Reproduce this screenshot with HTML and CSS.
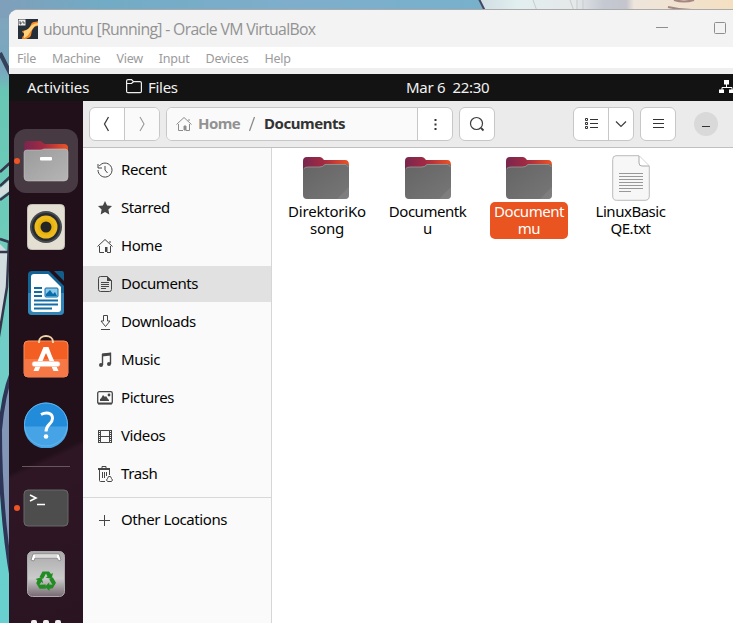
FILE: index.html
```html
<!DOCTYPE html>
<html lang="en">
<head>
<meta charset="utf-8">
<title>ubuntu [Running] - Oracle VM VirtualBox</title>
<link rel="stylesheet" href="styles.css">
</head>
<body>
<svg class="wallpaper" width="733" height="623" viewBox="0 0 733 623">
  <defs>
    <linearGradient id="sky" x1="0" x2="1"><stop offset="0" stop-color="#7f9fba"/><stop offset=".14" stop-color="#72abc5"/><stop offset=".4" stop-color="#7eaecb"/><stop offset="1" stop-color="#6fb4cb"/></linearGradient>
    <linearGradient id="pale" x1="0" x2="1"><stop offset="0" stop-color="#cfdce2"/><stop offset=".15" stop-color="#e2eff0"/><stop offset=".38" stop-color="#e5e8e9"/><stop offset=".49" stop-color="#c4c9d2"/><stop offset=".58" stop-color="#c4c5cd"/><stop offset=".61" stop-color="#eee5dc"/><stop offset="1" stop-color="#f4dfc1"/></linearGradient>
    <linearGradient id="side" x2="0" y2="1"><stop offset="0" stop-color="#7fa5bd"/><stop offset=".09" stop-color="#78a9bf"/><stop offset=".12" stop-color="#68c6b4"/><stop offset=".4" stop-color="#6fcdbc"/><stop offset="1" stop-color="#68d0d0"/></linearGradient>
    <filter id="soft"><feGaussianBlur stdDeviation=".7"/></filter>
  </defs>
  <rect width="733" height="24" fill="url(#sky)"/>
  <path d="M479 0H733V14H486z" fill="url(#pale)"/>
  <path d="M479-1 485 11" stroke="#424661" stroke-width="2"/>
  <path d="M533 0l4 11M570 0l4 11M577 0v11M583 0v11" stroke="#c6cbcd" fill="none"/>
  <path d="M668 7q12 3 24 3M674 0q10 3 20 0" stroke="#a58782" stroke-width="2" fill="none" filter="url(#soft)"/>
  <rect y="18" width="12" height="605" fill="url(#side)"/>
  <g filter="url(#soft)">
    <path d="M0 53 12 77" stroke="#34435a" stroke-width="4"/>
    <path d="M-2 190 12 178V189L-2 199zM-2 242l10 10-2 46-8 38z" fill="#d3dcdf"/>
    <path d="M0 172 12 161M0 186 12 175M0 200 12 191M0 239l9 3-2 45-9 55M0 252h8" stroke="#34374d" stroke-width="2.500" fill="none"/>
    <path d="M12 270Q5 330 0 345V420L12 370z" fill="#70cdc8"/>
    <path d="M12 372Q3 395 0 430 0 510 12 580" fill="#8297b8" stroke="#2d3557" stroke-width="4"/>
  </g>
</svg>
<main class="window">
  <header class="titlebar">
    <svg class="vbox" width="20" height="20" viewBox="0 0 20 20"><rect width="20" height="20" fill="#26303a"/><path d="M4 12c4-1 5-1 7-3s2-6 5-6 4-1 4-1v5c-3 0-4 1-5 3-2 2-1 6-3 8l-4 2H4c0-3 2-4 5-6-2 1-4 1-5-2z" fill="#f28a26"/><path d="M6 12c4-1 5-3 7-5s3-2 7-3v2c-5 1-5 4-7 6s-2 5-7 7" fill="#ffd17a"/><rect x=".5" y=".5" width="7" height="6" fill="#eee"/><path d="M2 2v3h1V3M5 2v2h2" stroke="#333" stroke-width=".8" fill="none"/></svg>
    <h1>ubuntu [Running] - Oracle VM VirtualBox</h1>
    <svg class="controls" width="72" height="14" viewBox="0 0 72 14" fill="none" stroke="#8e8e8e" stroke-width="1"><path d="M1 5.500h12"/><rect x="59.500" y=".5" width="11" height="11" rx="1"/></svg>
  </header>
  <nav class="menubar"><span>File</span><span>Machine</span><span>View</span><span>Input</span><span>Devices</span><span>Help</span></nav>
  <section class="guest">
    <header class="topbar">
      <span class="activities">Activities</span>
      <span class="app"><svg width="16" height="15" viewBox="0 0 16 15" fill="none" stroke="#eee" stroke-width="1.200"><path d="M.6 4.300V2Q.6.700 2 .700H5.500L7.500 2.700H14Q15.400 2.700 15.400 4V12.500Q15.400 13.700 14 13.700H2Q.6 13.700.6 12.500V4.500H5.500L7.500 2.700"/></svg><span>Files</span></span>
      <span class="clock">Mar 6&nbsp; 22:30</span>
      <svg class="network" width="14" height="14" viewBox="0 0 14 14"><path d="M7.500 4v3M3 10V7.500h10V10" fill="none" stroke="#fff"/><path d="M5 0h5v4.500H5zM0 9.500h5V13H0zM10 9.500h5V13h-5z" fill="#fff"/></svg>
    </header>
    <div class="desktop">
      <aside class="dock">
        <div class="tile active"><i class="dot"></i><svg width="46" height="42" viewBox="0 0 46 42"><defs><linearGradient id="tab" x2="1"><stop stop-color="#78264f"/><stop offset=".45" stop-color="#a32a42"/><stop offset="1" stop-color="#ed5425"/></linearGradient><linearGradient id="metal" x2="1" y2="1"><stop stop-color="#9b9b9b"/><stop offset="1" stop-color="#b5b5b5"/></linearGradient></defs><path d="M1 16V5Q1 1 5 1H17Q19 1 20 3L22 4H41Q45 4 45 8V17z" fill="url(#tab)"/><path d="M1 12.500Q1 10 4 10H17Q19 10 21 9H42Q45 9 45 12V37Q45 41 41 41H5Q1 41 1 37z" fill="url(#metal)" stroke="#ccc" stroke-opacity=".5"/><rect x="17" y="17" width="12" height="3.500" rx="1" fill="#fff"/></svg></div>
        <div class="tile"><svg width="38" height="46" viewBox="0 0 38 46"><rect x=".5" y=".5" width="37" height="45" rx="4" fill="#e3dfd2" stroke="#c4c0b7"/><circle cx="19" cy="23" r="16" fill="#484c4f"/><circle cx="19" cy="23" r="14" fill="#282c30"/><circle cx="19" cy="23" r="11.500" fill="#edbb1d"/><circle cx="19" cy="23" r="8" fill="#e8b30e"/><circle cx="19" cy="23" r="5.500" fill="#252525"/></svg></div>
        <div class="tile"><svg width="38" height="46" viewBox="0 0 38 46"><path d="M1 5Q1 1 5 1H22L37 16V41Q37 45 33 45H5Q1 45 1 41z" fill="#126496"/><path d="M1 23H37V41Q37 45 33 45H5Q1 45 1 41z" fill="#3285b7"/><path d="M27 1H35Q37 1 37 4V11z" fill="#125f8b"/><path d="M4 7Q4 4 7 4H21L34 17V39Q34 42 31 42H7Q4 42 4 39z" fill="#fff"/><path d="M7 18h8M7 22h8M7 26h8M7 30.500h24M7 34.500h24M7 38.500h18" stroke="#126da5" stroke-width="2"/><rect x="18" y="18" width="13" height="9" rx="1" fill="#8fc9e7" stroke="#086eaa"/><path d="M19 26v-2l4-4 3 4 2-2 2 4z" fill="#086eaa"/></svg></div>
        <div class="tile"><svg class="store" width="46" height="46" viewBox="0 0 46 46"><rect x="1" y="8" width="44" height="36" rx="4" fill="#f35e23" stroke="#fa8e61"/><path d="M1 26H45V40Q45 44 41 44H5Q1 44 1 40z" fill="#f67847"/><path d="M16 10V9C16 1 30 1 30 9v1" fill="none" stroke="#f2d3a4" stroke-width="2"/><path d="M20.500 14h5l3 8 7 16h-5l-3-7H18.500l-3 7h-5zM23 20l-3.500 8h7z" fill="#fff" fill-rule="evenodd"/><rect x="9" y="28.500" width="28" height="5" rx="2.500" fill="#fff" stroke="#f2b194" stroke-width=".6"/></svg></div>
        <div class="tile"><svg width="46" height="46" viewBox="0 0 46 46"><circle cx="23" cy="22.500" r="22" fill="#228bda"/><path d="M1 24.500A22 22 0 0 0 45 24.500z" fill="#46a3e5"/><circle cx="23" cy="22.500" r="21.500" fill="none" stroke="#62b5ed"/><path d="M18 12.500C23 10 29.500 10.500 29.500 16.500 29.500 22 23 22 23 29.500" fill="none" stroke="#fff" stroke-width="3"/><circle cx="23" cy="34.500" r="2.300" fill="#fff"/></svg></div>
        <hr>
        <div class="tile"><i class="dot"></i><svg width="46" height="38" viewBox="0 0 46 38"><rect x="1" y="1" width="44" height="36" rx="4" fill="#4d4d4d" stroke="#696969"/><path d="m7 6 6 3-6 3M14 15.500h8" fill="none" stroke="#fff" stroke-width="1.600"/></svg></div>
        <div class="tile"><svg width="38" height="46" viewBox="0 0 38 46"><defs><linearGradient id="bin" x2="0" y2="1"><stop stop-color="#aaa"/><stop offset=".6" stop-color="#cbcbcb"/><stop offset="1" stop-color="#766971"/></linearGradient></defs><rect x=".5" y=".5" width="37" height="45" rx="5" fill="url(#bin)" stroke="#aaa"/><path d="M4 9 6 3H32l2 6-2 1-2-3H8l-1 3z" fill="#fff" stroke="#777" stroke-width=".7"/><path d="M8 5h22" stroke="#999" stroke-width=".7"/><g fill="#208c21" transform="translate(19 30)"><path id="recycle" d="M-6.500-4-3.500-9.500H3L5-7 7-8 5.500-2-.5-3.500l2-1L0-7.500-3-2z"/><use href="#recycle" transform="rotate(120)"/><use href="#recycle" transform="rotate(240)"/></g></svg></div>
        <svg class="grid-icon" width="30" height="4"><path d="M0 4V2q0-2 2-2h2q2 0 2 2v2zM12 4V2q0-2 2-2h2q2 0 2 2v2zM24 4V2q0-2 2-2h2q2 0 2 2v2z" fill="#f4f1f2"/></svg>
      </aside>
      <section class="manager">
        <header class="toolbar">
          <div class="group history"><span class="cell"><svg width="8" height="16" viewBox="0 0 8 16"><path d="M5.500 1 1.500 8l4 7" fill="none" stroke="#3d3d3d" stroke-width="1.300"/></svg></span><span class="cell off"><svg width="8" height="16" viewBox="0 0 8 16"><path d="m2 1 4 7-4 7" fill="none" stroke="#999" stroke-width="1.100"/></svg></span></div>
          <div class="group path"><span class="crumbs"><svg width="16" height="16" viewBox="0 0 16 16" fill="none" stroke="#8c8c8c"><path d="m.5 8.500 7.500-7 7.500 7M2.500 8v6.500H7M13.500 8v6.500H10M13 5V3"/><path d="M8 10h2v4H8z" fill="#8c8c8c"/></svg><b class="home">Home</b><svg class="slash" width="6" height="16" viewBox="0 0 6 16"><path d="M5.500 1 .5 15" stroke="#888" stroke-width="1.200"/></svg><b class="current">Documents</b></span><span class="cell"><svg width="3" height="12"><path d="M.5 1h2v2h-2zM.5 5.500h2v2h-2zM.5 10h2v2h-2z" fill="#333"/></svg></span></div>
          <div class="group single"><svg width="16" height="16" viewBox="0 0 16 16" fill="none" stroke="#3d3d3d" stroke-width="1.200"><circle cx="7.500" cy="7.500" r="6"/><path d="m12 12 2.500 2.500" stroke-width="1.800"/></svg></div>
          <div class="group view"><span class="cell list"><svg width="13" height="13" viewBox="0 0 13 13" fill="none" stroke="#333"><path d="M.5 1.500h2v2h-2zM.5 5.500h2v2h-2zM.5 9.500h2v2h-2zM5 2.500h8M5 6.500h8M5 10.500h8"/></svg></span><span class="cell"><svg width="12" height="8" viewBox="0 0 12 8"><path d="m1 1.500 5 5 5-5" fill="none" stroke="#3d3d3d" stroke-width="1.200"/></svg></span></div>
          <div class="group single"><svg width="11" height="11"><path d="M0 1.500h11M0 5.500h11M0 9.500h11" stroke="#333"/></svg></div>
          <span class="minimize"></span>
        </header>
        <div class="browser">
          <nav class="sidebar">
            <div class="place"><svg viewBox="0 0 16 16"><path d="M2.300 4A7 7 0 1 1 1 8M1 2v4h4M8 4v4l2.500 3"/></svg><span>Recent</span></div>
            <div class="place"><svg viewBox="0 0 16 16"><path class="solid" d="m8 1 2.100 4.500 4.900.6-3.600 3.400.9 5L8 12.100 3.700 14.500l.9-5L1 6.100l4.900-.6z"/></svg><span>Starred</span></div>
            <div class="place"><svg viewBox="0 0 16 16"><path d="m.5 8.500 7.500-7 7.500 7M2.500 8v6.500H7M13.500 8v6.500H10M13 5V3"/><path class="solid" d="M8 9h2.500v5H8z"/></svg><span>Home</span></div>
            <div class="place selected"><svg viewBox="0 0 16 16"><path d="M3.500.5H10l4.500 4v9q0 2-2 2h-9q-2 0-2-2v-11q0-2 2-2zM4 6.500h8M4 8.500h8M4 10.500h8M4 12.500h5"/><path class="solid" d="M10 0v5h5z"/></svg><span>Documents</span></div>
            <div class="place"><svg viewBox="0 0 16 16"><path d="M6.500 1.500h4V7H13l-4.500 5.500L4 7h2.500zM4 15.500h9"/></svg><span>Downloads</span></div>
            <div class="place"><svg viewBox="0 0 16 16"><path d="M5.500 13V2.500l8-1V12" stroke-width="1.400"/><path class="solid" d="M5 1.500 14 .5v3l-9 1z"/><circle class="solid" cx="4" cy="13" r="2"/><circle class="solid" cx="12" cy="12" r="2"/></svg><span>Music</span></div>
            <div class="place"><svg viewBox="0 0 16 16"><rect x=".7" y="1.700" width="14.600" height="12" rx="1.500" stroke-width="1.300"/><path d="M1 13.500h14" stroke-width="2"/><path class="solid" d="M3 11v-2l1-.5 2-3.500 2 2 1-1 2 3 1 1v1z"/><circle class="solid" cx="12" cy="5" r="1.400"/></svg><span>Pictures</span></div>
            <div class="place"><svg viewBox="0 0 16 16"><path d="M3.500 2.500h9v12h-9zM3.500 8.500h9M1.500 2v13M14.500 2v13"/><path d="M2.500 2v13M13.500 2v13" stroke-width="2" stroke-dasharray="1 1"/></svg><span>Videos</span></div>
            <div class="place"><svg viewBox="0 0 16 16"><path d="M5 2V.5h4V2M2.500 4v10.500q0 1 1 1H8M12.500 4v5M5.500 6v6M7.500 6v6M9.500 6v4"/><path d="M1 3h12" stroke-width="2"/><path d="M10.500 15.500q-2-1.500 0-3l1-2h2l1 2q2 1.500 0 3z"/></svg><span>Trash</span></div>
            <hr>
            <div class="place"><svg viewBox="0 0 16 16"><path d="M2 8.500h11M7.500 3v11"/></svg><span>Other Locations</span></div>
          </nav>
          <section class="files-view">
            <article class="item"><svg class="folder" viewBox="0 0 46 43"><defs><linearGradient id="gray" x2="1" y2="1"><stop stop-color="#646464"/><stop offset="1" stop-color="#777"/></linearGradient><g id="folder"><path d="M0 18V4Q0 0 4 0H17Q19 0 21 3H42Q46 3 46 8V18z" fill="url(#tab)"/><path d="M0 13Q0 10 4 10H16Q19 10 22 7H43Q46 7 46 10V38Q46 42 42 42H4Q0 42 0 38z" fill="url(#gray)"/><path d="M1 11.500Q2 10 5 10H17Q20 10 22 7.500H43L45.500 10" fill="none" stroke="#999" stroke-width=".8"/><path d="M34 42 46 30V38Q46 42 42 42z" fill="#888" opacity=".5"/></g></defs><use href="#folder"/></svg><p class="loose">DirektoriKo<br>song</p></article>
            <article class="item"><svg class="folder" viewBox="0 0 46 43"><use href="#folder"/></svg><p>Documentk<br>u</p></article>
            <article class="item chosen"><svg class="folder" viewBox="0 0 46 43"><use href="#folder"/></svg><p>Document<br>mu</p></article>
            <article class="item"><svg class="text-file" viewBox="0 0 38 46"><path d="M4 .7H27L37.300 11V41Q37.300 45.300 33 45.300H4.500Q.7 45.300.7 41V4.500Q.7.700 4 .700z" fill="#f7f7f7" stroke="#bbb"/><path d="M27 1V8q0 3 3 3h7" fill="#fff" stroke="#aaa"/><path d="M7 18.500h24M7 21.500h24M7 24.500h24M7 27.500h24M7 30.500h24M7 33.500h24M7 36.500h12" stroke="#999"/></svg><p>LinuxBasic<br>QE.txt</p></article>
          </section>
        </div>
      </section>
    </div>
  </section>
</main>
</body>
</html>
```
FILE: styles.css
```css
* { box-sizing: border-box; }
body { margin: 0; width: 733px; height: 623px; overflow: hidden; font: 15px/20px "Noto Sans", sans-serif; color: #111; }
svg { display: block; flex: none; }
.wallpaper { position: absolute; inset: 0; z-index: -1; }
.window { margin: 9px 0 0 9px; height: 614px; border-top: 1px solid #aaa; border-radius: 9px 0 0; overflow: hidden; background: #efefef; display: flex; flex-direction: column; }
.titlebar { height: 37px; flex: none; display: flex; align-items: center; background: #f3f3f3; padding: 0 6px 0 9px; }
.vbox { margin-right: 5px; }
h1 { margin: 0; font: 15.8px/24px "Open Sans", sans-serif; letter-spacing: -.67px; color: #929292; white-space: nowrap; }
.controls { margin-left: auto; }
.menubar { height: 21px; flex: none; background: #fff; margin-bottom: 6px; padding: 2px 0 0 8px; display: flex; align-items: center; gap: 16px; color: #9b9b9b; font-size: 12.5px; letter-spacing: -.24px; }
.guest { flex: 1; min-height: 0; display: flex; flex-direction: column; }
.topbar { height: 27px; flex: none; background: #131313; color: #f1f1f1; display: flex; align-items: center; padding: 0 0 2px 18px; letter-spacing: -.3px; }
.activities { width: 99px; letter-spacing: 0; }
.app { width: 280px; display: flex; align-items: center; gap: 6px; }
.network { margin-left: auto; }
.desktop { flex: 1; min-height: 0; display: flex; }
.dock { width: 74px; flex: none; padding: 28px 5px 0; background: linear-gradient(155deg, #211019 0 67%, #2e1625 68%, #2b1422); display: flex; flex-direction: column; align-items: center; gap: 2px; }
.tile { width: 64px; height: 64px; flex: none; display: grid; place-items: center; position: relative; }
.active { background: #483a42; border-radius: 12px; }
.dot { position: absolute; left: 0; top: 29px; width: 6px; height: 6px; border-radius: 50%; background: #ed5525; }
.store { margin-top: -6px; }
.dock hr { width: 48px; height: 1px; border: 0; background: #66565e; margin: 7px 0; flex: none; }
.grid-icon { margin-top: 12px; }
.manager { flex: 1; min-width: 0; display: flex; flex-direction: column; background: #fff; }
.toolbar { height: 47px; flex: none; background: #ebebeb; border-bottom: 1px solid #c0c0c0; display: flex; align-items: center; gap: 6px; padding: 0 15px 1px 6px; }
.group { height: 34px; border: 1px solid #c7c7c7; border-radius: 6px; background: #fff; display: flex; overflow: hidden; flex: none; }
.cell { flex: 1; display: grid; place-items: center; }
.cell + .cell, .crumbs + .cell { border-left: 1px solid #c7c7c7; }
.off { background: #fafafa; }
.history { width: 71px; }
.path { width: 287px; }
.crumbs { width: 250px; background: #fafafa; display: flex; align-items: center; padding-left: 9px; letter-spacing: -.45px; }
.crumbs b { padding-bottom: 2px; }
.home { width: 41px; margin-left: 6px; color: #929292; letter-spacing: -.7px; }
.home { letter-spacing: -.6px; }
.slash { margin: 0 9px 0 10px; }
.current { color: #333; }
.single { width: 36px; align-items: center; justify-content: center; }
.view { width: 61px; margin-left: 72px; }
.list { flex: 0 0 34px; }
.minimize { width: 24px; height: 24px; border-radius: 50%; background: #d9d9d9; margin-left: auto; display: grid; place-items: center; }
.minimize::before { content: ""; width: 8px; height: 1px; background: #333; margin-top: 5px; }
.browser { flex: 1; min-height: 0; display: flex; }
.sidebar { width: 189px; flex: none; background: #fafafa; border-right: 1px solid #d6d6d6; padding-top: 4px; letter-spacing: -.42px; color: #050505; }
.place { height: 36px; margin-bottom: 2px; padding-left: 14px; display: flex; align-items: center; gap: 8px; }
.place svg { width: 16px; height: 16px; fill: none; stroke: #464646; }
.place span { padding-bottom: 2px; }
.place .solid { fill: #464646; stroke: none; }
.selected { background: #e1e1e1; }
.sidebar hr { height: 1px; border: 0; background: #d8d8d8; margin: 5px 0 4px; }
.files-view { flex: 1; display: flex; align-items: flex-start; gap: 13.5px; padding: 7px 0 0 10px; }
.item { width: 88px; flex: none; text-align: center; display: flex; flex-direction: column; align-items: center; }
.item p { margin: 0; padding: 1px 4px 2px; line-height: 17px; white-space: nowrap; letter-spacing: -.48px; color: #050505; }
.item .loose { letter-spacing: -.2px; padding-left: 6px; }
.folder { width: 46px; height: 43px; margin: 2px 0 2px; }
.text-file { width: 38px; height: 46px; margin-bottom: 1px; }
.chosen .folder { margin-right: 1px; }
.item.chosen p { background: #e95420; color: #fff; border-radius: 5px; }
```
